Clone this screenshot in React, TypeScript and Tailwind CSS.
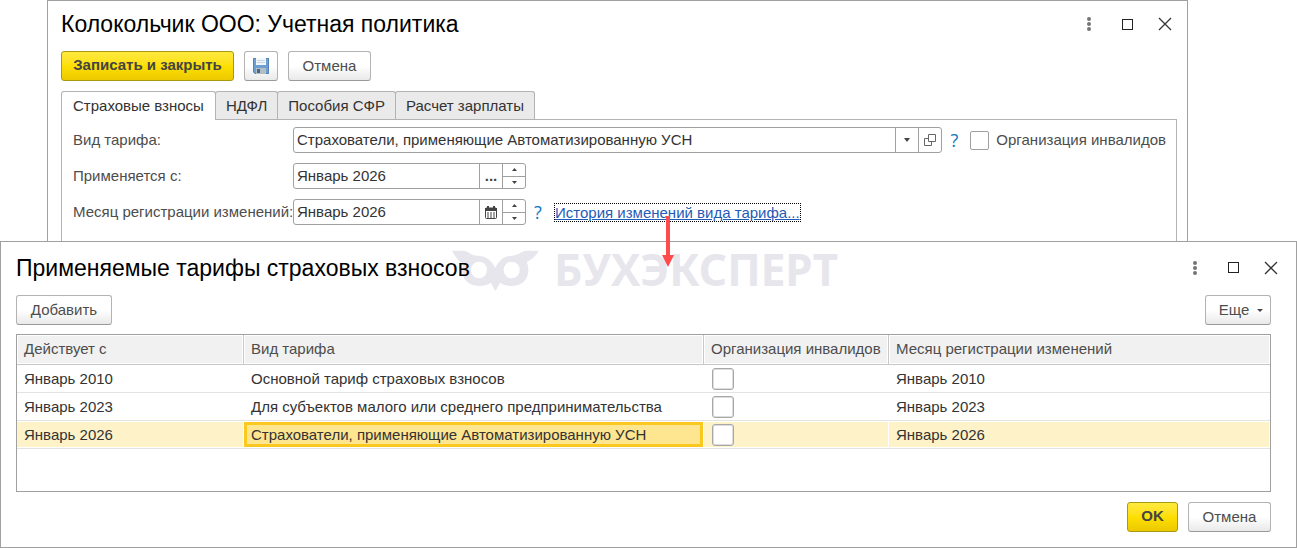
import { useState } from 'react';
import type { ButtonHTMLAttributes, ReactNode } from 'react';
import { clsx } from 'clsx';

const tabs = ['Страховые взносы', 'НДФЛ', 'Пособия СФР', 'Расчет зарплаты'];

const rates = [
  { from: 'Январь 2010', kind: 'Основной тариф страховых взносов', month: 'Январь 2010' },
  { from: 'Январь 2023', kind: 'Для субъектов малого или среднего предпринимательства', month: 'Январь 2023' },
  { from: 'Январь 2026', kind: 'Страхователи, применяющие Автоматизированную УСН', month: 'Январь 2026' },
];

type ButtonProps = ButtonHTMLAttributes<HTMLButtonElement> & { primary?: boolean };

function Button({ primary, className, ...props }: ButtonProps) {
  return (
    <button
      type="button"
      className={clsx(
        'flex h-[30px] items-center justify-center rounded-[3px] border',
        primary
          ? 'border-[#a89a10] bg-linear-to-b from-[#ffe93c] via-[#fddf00] to-[#ecc900] pb-0.5 font-bold text-[#444444]'
          : 'border-[#b3b3b3] border-b-[#999999] bg-linear-to-b from-white from-50% to-[#e9e9e9] text-[#4d4d4d]',
        className
      )}
      {...props}
    />
  );
}

function WindowControls() {
  return (
    <div className="flex items-center">
      <button type="button" aria-label="Меню" className="p-2">
        <svg width="6" height="16" viewBox="0 0 6 16" fill="#757575">
          <circle cx="3" cy="3" r="2" />
          <circle cx="3" cy="8" r="2" />
          <circle cx="3" cy="13" r="2" />
        </svg>
      </button>
      <button type="button" aria-label="Развернуть" className="ml-[13px] p-2">
        <svg width="13" height="13" viewBox="0 0 13 13" fill="none" stroke="#222222">
          <rect x="1.5" y="1.5" width="10" height="10" />
        </svg>
      </button>
      <button type="button" aria-label="Закрыть" className="ml-2 p-2">
        <svg width="14" height="14" viewBox="0 0 14 14" fill="none" stroke="#333333" strokeWidth="1.3">
          <path d="M1 1L13 13M13 1L1 13" />
        </svg>
      </button>
    </div>
  );
}

function Spinner() {
  return (
    <div className="flex w-[23px] flex-col border-l border-[#a0a0a0]">
      <button type="button" aria-label="Больше" className="flex flex-1 items-center justify-center border-b border-[#a0a0a0]">
        <svg width="5" height="3" viewBox="0 0 5 3" fill="#444444">
          <path d="M2.500 0L5 3H0Z" />
        </svg>
      </button>
      <button type="button" aria-label="Меньше" className="flex flex-1 items-center justify-center">
        <svg width="5" height="3" viewBox="0 0 5 3" fill="#444444">
          <path d="M0 0H5L2.500 3Z" />
        </svg>
      </button>
    </div>
  );
}

function Field({ id, value, className, children }: { id: string; value: string; className?: string; children: ReactNode }) {
  return (
    <div className={clsx('flex h-[26px] overflow-hidden rounded-[3px] border border-[#a0a0a0] bg-white', className)}>
      <input id={id} defaultValue={value} className="min-w-0 flex-1 px-[3px] text-[#333333] outline-none" />
      {children}
    </div>
  );
}

function FieldButton({ label, children }: { label: string; children: ReactNode }) {
  return (
    <button type="button" aria-label={label} className="flex w-[23px] items-center justify-center border-l border-[#a0a0a0] text-[#444444]">
      {children}
    </button>
  );
}

function Help() {
  return (
    <button type="button" className="w-6 text-center font-['Open_Sans',sans-serif] text-lg leading-5 font-medium text-[#0b78c1]">
      ?
    </button>
  );
}

function SaveIcon() {
  return (
    <svg width="18" height="18" viewBox="0 0 18 18">
      <path d="M1 1H17V17H3L1 15Z" fill="#6f9fd0" />
      <path d="M1.500 1.500H16.500V16.500H3.200L1.500 14.800Z" fill="none" stroke="#5583b8" />
      <rect x="4" y="1" width="10" height="7" fill="#f2f7fc" />
      <path d="M5 3.500H13M5 5.500H13" stroke="#c9d6e4" />
      <rect x="4" y="11" width="10" height="6" fill="#b4bcc4" />
      <rect x="5" y="12" width="3" height="4" fill="#41688f" />
    </svg>
  );
}

function CalendarIcon() {
  return (
    <svg width="12" height="13" viewBox="0 0 12 13">
      <rect x="0.500" y="2" width="11" height="10.500" rx="1" fill="#fff" stroke="#444" />
      <path d="M0 2H12V5H0Z" fill="#444" />
      <path d="M3 0V3M9 0V3" stroke="#444" strokeWidth="2" />
      <path d="M2 7H4M5 7H7M8 7H10M2 9H4M5 9H7M8 9H10M2 11H4M5 11H7M8 11H10" stroke="#444" />
    </svg>
  );
}

function Watermark() {
  return (
    <div aria-hidden="true" className="pointer-events-none absolute top-0 left-[451px] flex items-start text-[#e7e6ed]">
      <svg width="88" height="42" viewBox="36 46 264 126" className="mt-2" fill="currentColor">
        <path
          fillRule="evenodd"
          d="M36 48H66C88 48 92 64 114 63C145 64 158 84 166 100C174 84 186 64 216 63C238 62 242 48 262 48H296C287 66 272 76 260 82C270 104 266 136 240 149C220 158 196 154 180 144L166 170L153 144C137 154 113 158 93 149C66 136 62 108 70 87C56 80 46 68 36 48ZM117 81A24 25 0 1 0 117 131A24 25 0 1 0 117 81ZM215 81A24 25 0 1 0 215 131A24 25 0 1 0 215 81Z"
        />
      </svg>
      <span className="ml-[14px] font-['Noto_Sans',sans-serif] text-[44px] leading-[54px] font-bold">БУХЭКСПЕРТ</span>
    </div>
  );
}

export default function App() {
  const [activeTab, setActiveTab] = useState(tabs[0]);

  return (
    <div className="bg-white font-['Liberation_Sans',Arial,sans-serif] text-[15px] leading-5 text-[#4d4d4d]">
      {/* Accounting policy window */}
      <section className="mr-[109px] ml-[47px] border border-b-0 border-[#a0a0a0] pr-[10px] pl-[13px]">
        <header className="-mr-[3px] flex h-[50px] items-center justify-between pb-1">
          <h1 className="text-[23px] text-black">Колокольчик ООО: Учетная политика</h1>
          <WindowControls />
        </header>

        <div className="flex gap-[10px]">
          <Button primary className="w-[173px]">Записать и закрыть</Button>
          <Button className="w-[34px]" aria-label="Записать">
            <SaveIcon />
          </Button>
          <Button className="w-[83px]">Отмена</Button>
        </div>

        <div role="tablist" className="mt-[10px] flex">
          {tabs.map((tab) => (
            <button
              key={tab}
              type="button"
              role="tab"
              aria-selected={tab === activeTab}
              onClick={() => setActiveTab(tab)}
              className={clsx(
                '-mr-px h-7 rounded-t-[3px] border border-b-0 border-[#b3b3b3] text-[#333333]',
                tab === activeTab ? 'relative -mb-px h-[29px] bg-white px-[11px]' : 'bg-[#eaeaea] px-[10px]'
              )}
            >
              {tab}
            </button>
          ))}
        </div>

        <div className="flex flex-col gap-[10px] border border-b-0 border-[#b3b3b3] pt-[7px] pr-[10px] pb-4 pl-[11px]">
          <div className="flex items-center">
            <label htmlFor="kind" className="w-[220px]">Вид тарифа:</label>
            <Field id="kind" value="Страхователи, применяющие Автоматизированную УСН" className="flex-1">
              <FieldButton label="Выбрать">
                <svg width="6" height="4" viewBox="0 0 6 4" fill="#444444">
                  <path d="M0 0H6L3 4Z" />
                </svg>
              </FieldButton>
              <FieldButton label="Открыть">
                <svg width="12" height="12" viewBox="0 0 12 12" fill="none" stroke="#666666">
                  <path d="M4.500 0.500H11.500V7.500H4.500ZM4.500 4.500H0.500V11.500H7.500V7.500" />
                </svg>
              </FieldButton>
            </Field>
            <Help />
            <label className="ml-1 flex items-center gap-[7px]">
              <input type="checkbox" className="size-[19px] appearance-none rounded-[2px] border border-[#a0a0a0] bg-white" />
              Организация инвалидов
            </label>
          </div>

          <div className="flex items-center">
            <label htmlFor="since" className="w-[220px]">Применяется с:</label>
            <Field id="since" value="Январь 2026" className="w-[233px]">
              <FieldButton label="Выбрать месяц">
                <span className="font-bold">...</span>
              </FieldButton>
              <Spinner />
            </Field>
          </div>

          <div className="flex items-center">
            <label htmlFor="month" className="w-[220px] whitespace-nowrap">Месяц регистрации изменений:</label>
            <Field id="month" value="Январь 2026" className="w-[233px]">
              <FieldButton label="Календарь">
                <CalendarIcon />
              </FieldButton>
              <Spinner />
            </Field>
            <Help />
            <a href="#rates" className="relative ml-1 h-[19px] border border-dotted border-black leading-[18px] text-[#1f5cb8] underline">
              История изменений вида тарифа...
              <svg width="12" height="51" viewBox="0 0 12 51" className="absolute top-3 left-[107px] z-10" fill="#ff4b4b">
                <path d="M4 0H8V39H12L6 51L0 39H4Z" />
              </svg>
            </a>
          </div>
        </div>
      </section>

      {/* Applied rates window */}
      <section id="rates" className="relative border border-[#a0a0a0] pr-[25px] pb-[15px] pl-[15px]">
        <Watermark />
        <header className="relative -mr-[15px] flex h-[53px] items-center justify-between pb-0.5">
          <h2 className="text-[23px] text-black">Применяемые тарифы страховых взносов</h2>
          <WindowControls />
        </header>

        <div className="flex justify-between">
          <Button className="w-24">Добавить</Button>
          <Button className="w-[66px] gap-2 pl-[6px]">
            Еще
            <svg width="6" height="3" viewBox="0 0 6 3" fill="#444444">
              <path d="M0 0H6L3 3Z" />
            </svg>
          </Button>
        </div>

        <div className="mt-[9px] h-[158px] border border-[#a0a0a0]">
          <table className="w-full table-fixed border-separate border-spacing-0 text-left">
            <thead>
              <tr className="h-[30px] text-[#4d4d4d] *:border-b *:border-[#c8c8c8] *:bg-[#f1f1f1] *:px-[7px] *:pb-0.5 *:font-normal *:shadow-[inset_0_0_0_1px_white]">
                <th className="w-[227px] border-r">Действует с</th>
                <th className="w-[460px] border-r">Вид тарифа</th>
                <th className="w-[185px] border-r">Организация инвалидов</th>
                <th>Месяц регистрации изменений</th>
              </tr>
            </thead>
            <tbody className="text-[#333333]">
              {rates.map((rate, i) => {
                const selected = i === 2;
                return (
                  <tr
                    key={rate.from}
                    className={clsx(
                      'h-7 *:border-b *:border-[#e3e3e3] *:px-[7px]',
                      selected && '*:bg-[#fef2c8] *:shadow-[inset_-1px_0_white,inset_0_1px_white,inset_0_-1px_white]'
                    )}
                  >
                    <td>{rate.from}</td>
                    <td className="relative">
                      {selected && <span className="absolute inset-x-0 top-px bottom-px mr-px border-3 border-[#fac81e] bg-[#fee590]" />}
                      <span className="relative">{rate.kind}</span>
                    </td>
                    <td>
                      <input
                        type="checkbox"
                        aria-label="Организация инвалидов"
                        className="ml-px block size-[22px] appearance-none rounded-[3px] border border-[#a8a8a8] bg-white shadow-[inset_0_0_0_1px_#dddddd]"
                      />
                    </td>
                    <td>{rate.month}</td>
                  </tr>
                );
              })}
            </tbody>
          </table>
        </div>

        <footer className="mt-[10px] flex justify-end gap-[10px]">
          <Button primary className="w-[51px]">OK</Button>
          <Button className="w-[83px]">Отмена</Button>
        </footer>
      </section>
    </div>
  );
}
